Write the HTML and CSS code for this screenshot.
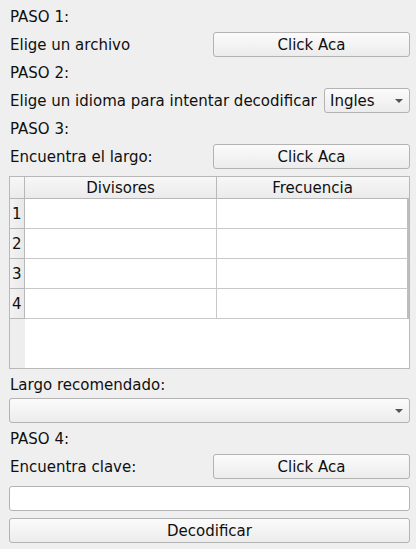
FILE: index.html
```html
<!DOCTYPE html>
<html>
<head>
<meta charset="utf-8">
<link rel="stylesheet" href="styles.css">
</head>
<body>
<div class="form">
  <div class="row"><span class="label">PASO 1:</span></div>
  <div class="row split">
    <span class="label">Elige un archivo</span>
    <button class="btn half">Click Aca</button>
  </div>
  <div class="row"><span class="label">PASO 2:</span></div>
  <div class="row split">
    <span class="label">Elige un idioma para intentar decodificar</span>
    <div class="combo small"><span>Ingles</span><span class="arrow"></span></div>
  </div>
  <div class="row"><span class="label">PASO 3:</span></div>
  <div class="row split">
    <span class="label">Encuentra el largo:</span>
    <button class="btn half">Click Aca</button>
  </div>
  <div class="table">
    <div class="thead">
      <div class="corner"></div>
      <div class="th">Divisores</div>
      <div class="th last">Frecuencia</div>
    </div>
    <div class="tr"><div class="vh">1</div><div class="td"></div><div class="td last"></div></div>
    <div class="tr"><div class="vh">2</div><div class="td"></div><div class="td last"></div></div>
    <div class="tr"><div class="vh">3</div><div class="td"></div><div class="td last"></div></div>
    <div class="tr"><div class="vh">4</div><div class="td"></div><div class="td last"></div></div>
    <div class="filler"><div class="vh-fill"></div><div class="blank"></div></div>
  </div>
  <div class="row"><span class="label">Largo recomendado:</span></div>
  <div class="combo full"><span></span><span class="arrow"></span></div>
  <div class="row"><span class="label">PASO 4:</span></div>
  <div class="row split">
    <span class="label">Encuentra clave:</span>
    <button class="btn half">Click Aca</button>
  </div>
  <div class="input gap"></div>
  <button class="btn full gap">Decodificar</button>
</div>
</body>
</html>
```
FILE: styles.css
```css
* { box-sizing: border-box; }
html, body {
  margin: 0;
  padding: 0;
  background: #efefef;
  font-family: "DejaVu Sans", sans-serif;
  font-size: 15px;
  color: #0f0f0f;
}
.form {
  width: 416px;
  height: 549px;
  padding: 4px 6px 0 9px;
  display: flex;
  flex-direction: column;
  gap: 3px;
}
.row {
  height: 25px;
  display: flex;
  align-items: center;
}
.split { justify-content: space-between; }
.label { white-space: nowrap; padding-left: 1px; }
.btn {
  height: 25px;
  border: 1px solid #b3b3b3;
  border-radius: 3px;
  background: linear-gradient(#fbfbfb, #ececec);
  font-family: "DejaVu Sans", sans-serif;
  font-size: 15px;
  color: #0f0f0f;
  padding: 0;
  margin: 0;
}
.half { width: 197px; }
.full { width: 401px; }
.combo {
  height: 25px;
  border: 1px solid #b3b3b3;
  border-radius: 3px;
  background: linear-gradient(#fbfbfb, #ececec);
  display: flex;
  align-items: center;
  justify-content: space-between;
  padding: 0 6px 0 5px;
}
.combo.small { width: 86px; }
.combo.full { width: 401px; margin-top: -2px; }
.arrow {
  width: 0;
  height: 0;
  border-left: 4px solid transparent;
  border-right: 4px solid transparent;
  border-top: 4px solid #555;
  margin-top: 1px;
}
.table {
  width: 401px;
  height: 193px;
  margin-top: 4px;
  border: 1px solid #b8b8b8;
  background: #ffffff;
  display: flex;
  flex-direction: column;
}
.thead {
  height: 22px;
  display: flex;
  background: linear-gradient(#f7f7f7, #ebebeb);
  border-bottom: 1px solid #b8b8b8;
  flex: none;
}
.corner {
  width: 15px;
  border-right: 1px solid #b8b8b8;
  flex: none;
}
.th {
  width: 192px;
  border-right: 1px solid #b8b8b8;
  display: flex;
  align-items: center;
  justify-content: center;
  flex: none;
}
.th.last { width: 191px; border-right: none; }
.tr {
  height: 30px;
  display: flex;
  flex: none;
}
.vh {
  width: 15px;
  flex: none;
  background: linear-gradient(90deg, #f3f3f3, #e9e9e9);
  border-right: 1px solid #b8b8b8;
  border-bottom: 1px solid #b8b8b8;
  display: flex;
  align-items: center;
  padding-left: 2px;
}
.td {
  width: 192px;
  flex: none;
  border-right: 1px solid #c8c8c8;
  border-bottom: 1px solid #c8c8c8;
}
.td.last { width: 192px; border-right: 2px solid #bdbdbd; }
.filler {
  flex: 1;
  display: flex;
}
.vh-fill {
  width: 15px;
  background: #eeeeee;
  flex: none;
}
.blank { flex: 1; }
.input {
  width: 401px;
  height: 25px;
  border: 1px solid #b3b3b3;
  border-radius: 3px;
  background: #ffffff;
}
.gap { margin-top: 4px; }
```
